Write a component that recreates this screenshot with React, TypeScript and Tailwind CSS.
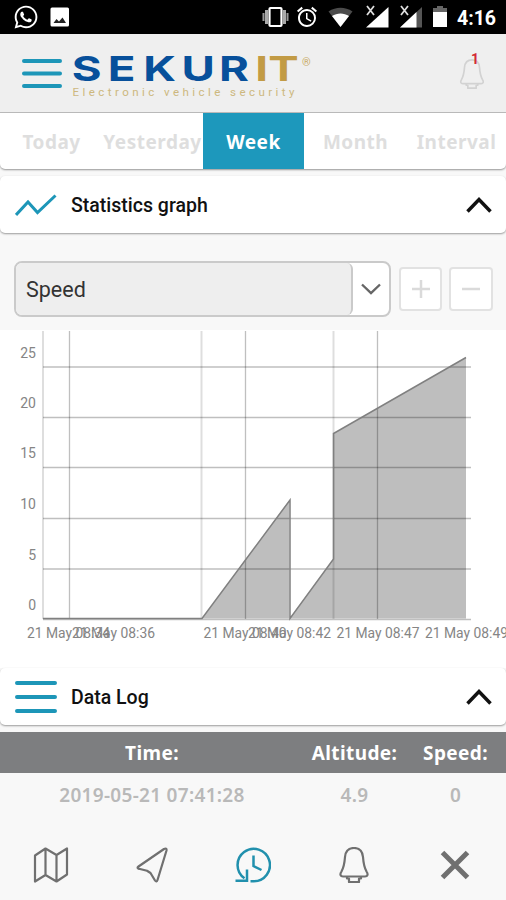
import React, { useState } from "react";
import { FaWhatsapp } from "react-icons/fa";
import { MdAlarm } from "react-icons/md";

const tabs = ["Today", "Yesterday", "Week", "Month", "Interval"];

const yTicks = [
  { label: "25", y: 37 },
  { label: "20", y: 87.5 },
  { label: "15", y: 137.5 },
  { label: "10", y: 188.5 },
  { label: "5", y: 239 },
  { label: "0", y: 289.5 },
];

const xTicks = [
  { label: "21 May 08:34", x: 27 },
  { label: "21 May 08:36", x: 72 },
  { label: "21 May 08:40", x: 203.5 },
  { label: "21 May 08:42", x: 248 },
  { label: "21 May 08:47", x: 336.5 },
  { label: "21 May 08:49", x: 425 },
];

const StatusBar: React.FC = () => (
  <div className="flex h-[34px] shrink-0 items-center bg-black pl-[13px] text-white">
    <FaWhatsapp className="size-[26px]" />
    <svg className="ml-[11px]" width="20" height="20" viewBox="0 0 20 20">
      <rect x="0.5" y="0.5" width="18.5" height="19" rx="1.5" fill="#fff" />
      <path d="M3.500 16l3-4 2.500 2.500 3.500-4 3.500 5.500z" fill="#222" />
    </svg>
    <svg className="ml-[192px]" width="27" height="24" viewBox="0 0 27 24">
      <path d="M1.500 8v8M25.500 8v8" stroke="#999" strokeWidth="2" />
      <path d="M4.500 5v14M22.500 5v14" stroke="#aaa" strokeWidth="3" />
      <rect x="7.500" y="3" width="12" height="18" rx="1" fill="#000" stroke="#fff" strokeWidth="2.200" />
    </svg>
    <MdAlarm className="ml-[6px] size-[24px]" />
    <svg className="ml-[9px]" width="25" height="22" viewBox="0 0 25 22">
      <path d="M0.500 5.500C8 0.500 17 0.500 24.500 5.500L12.500 21z" fill="#4b4b4b" />
      <path d="M4 10C9 6.500 16 6.500 21 10L12.500 21z" fill="#fff" />
    </svg>
    <svg className="ml-[12px]" width="24" height="24" viewBox="0 0 24 24">
      <path d="M23.500 2v20.500H1z" fill="#fff" />
      <path d="M0 0h11v12H0z" fill="#000" />
      <path d="M2 1l7 9M9 1l-7 9" stroke="#ddd" strokeWidth="1.800" />
    </svg>
    <svg className="ml-[10px]" width="24" height="24" viewBox="0 0 24 24">
      <path d="M23 2v20.500H1z" fill="#555" />
      <path d="M17.500 7v15.500H1z" fill="#fff" />
      <path d="M0 0h11v12H0z" fill="#000" />
      <path d="M2 1l7 9M9 1l-7 9" stroke="#ddd" strokeWidth="1.800" />
    </svg>
    <svg className="ml-[10px]" width="14" height="22" viewBox="0 0 14 22">
      <path d="M4 0h6v2h4v5H0V2h4z" fill="#666" />
      <path d="M0 6h14v15H0z" fill="#fff" />
    </svg>
    <span className="ml-[10px] mt-[3px] font-[Roboto] text-[19.5px] leading-none font-bold whitespace-nowrap">
      4:16
    </span>
  </div>
);

const Bell: React.FC<{ className: string; width: number }> = ({ className, width }) => (
  <svg className={className} width="30" height="36" viewBox="0 0 30 36" fill="none" stroke="currentColor" strokeWidth={width} strokeLinejoin="round">
    <path d="M15 1C9.500 1 6.500 4.500 6 10c-.5 7-1 10-3.500 14.500C.5 27.500 1.500 29.500 4 29.500h22c2.500 0 3.500-2 1.500-5C25 20 24.500 17 24 10 23.500 4.500 20.500 1 15 1z" />
    <path d="M8 30v1.500h2v3.500h10v-3.500h2V30" />
  </svg>
);

const Logo: React.FC = () => (
  <svg className="ml-[9px]" width="246" height="52" viewBox="0 0 246 52">
    <g fontFamily="Inter, sans-serif" fontWeight="700" fontSize="34" transform="scale(1.34 1)">
      <text x="0.500 27.500 54 82.500 110.500" y="34.500" fill="#07509b">
        SEKUR
      </text>
      <text x="137.500 147.300" y="34.500" fill="#c29b45">
        IT
      </text>
    </g>
    <text x="231" y="19" fill="#c9ab66" fontFamily="Roboto, sans-serif" fontSize="11">
      ®
    </text>
    <text x="1.500" y="49" fill="#cdb87e" fontFamily="Roboto, sans-serif" fontSize="11.500" textLength="222">
      Electronic vehicle security
    </text>
  </svg>
);

const MenuLines: React.FC<{ width: number; gap: number }> = ({ width, gap }) => (
  <svg width={width} height={gap * 2 + 4} viewBox={`0 0 ${width} ${gap * 2 + 4}`} stroke="#1d96b8" strokeWidth="4" strokeLinecap="round">
    <path d={`M2 2h${width - 4}M2 ${gap + 2}h${width - 4}M2 ${gap * 2 + 2}h${width - 4}`} />
  </svg>
);

interface sectionData {
  title: string;
  icon: React.ReactNode;
}

const Section: React.FC<sectionData> = ({ title, icon }) => (
  <div className="flex h-[57px] shrink-0 items-center rounded-[5px] bg-white pr-[14px] pl-[15px] shadow-[0_1px_2px_rgba(0,0,0,0.38)]">
    <div className="flex w-[56px] items-center">{icon}</div>
    <h2 className="pt-[2px] font-[Roboto] text-[19.5px] font-medium text-[#111]">{title}</h2>
    <svg className="ml-auto" width="26" height="18" viewBox="0 0 26 18" fill="none" stroke="#111" strokeWidth="3.500">
      <path d="M1.500 15.500L13 3.500l11.500 12" />
    </svg>
  </div>
);

const SpeedChart: React.FC = () => (
  <svg className="block shrink-0 bg-white" width="506" height="338" viewBox="0 0 506 338" fontFamily="Roboto, sans-serif">
    <path d="M202 288.500L289.500 170V288.500L333.500 229V103.500L466 27.500V288.500z" fill="#bebebe" />
    <g stroke="#000" strokeOpacity="0.250" strokeWidth="1.300">
      {yTicks.map((tick) => (
        <line key={tick.label} x1="43" x2="471" y1={tick.y} y2={tick.y} />
      ))}
      {[69.5, 245.5, 377.5].map((x) => (
        <line key={x} x1={x} x2={x} y1="1" y2="289" />
      ))}
    </g>
    <path d="M43 1V289M201.500 1V289M333.500 1V289" stroke="#000" strokeOpacity="0.130" strokeWidth="2" />
    <path d="M43 288.500H202L290 170V288.500L333.500 229V103.500L466 27.500" fill="none" stroke="#808080" strokeWidth="1.500" />
    <g fill="#858585" fontSize="14">
      {yTicks.map((tick) => (
        <text key={tick.label} x="36" y={tick.y - 9.5} textAnchor="end">
          {tick.label}
        </text>
      ))}
      {xTicks.map((tick) => (
        <text key={tick.label} x={tick.x} y="308" textLength="83" lengthAdjust="spacingAndGlyphs">
          {tick.label}
        </text>
      ))}
    </g>
  </svg>
);

const BottomNav: React.FC = () => (
  <nav className="grid grow grid-cols-5 items-center justify-items-center pt-[14px] text-[#707070]">
    <svg width="36" height="36" viewBox="0 0 36 36" fill="none" stroke="currentColor" strokeWidth="2.200" strokeLinejoin="round">
      <path d="M2 8.500L12.500 1.500l11 6.500L34 1.500v26L23.500 34.500l-11-6.500L2 34.500zM12.500 1.500V28M23.500 8v26.500" />
    </svg>
    <svg width="32" height="36" viewBox="0 0 32 36" fill="none" stroke="currentColor" strokeWidth="2.200" strokeLinejoin="round">
      <path d="M30.500 3.500c.3-2-.7-2.500-2.500-1.500L2.500 19.500c-1.500 1-1 2 .5 2.300l8 2 3.500 2.200 4.500 7.500c1 1.500 2 1.300 2.500-.5z" />
    </svg>
    <svg width="36" height="36" viewBox="0 0 36 36" fill="none" stroke="#2190ad" strokeWidth="2.500">
      <path d="M9.500 31.300A16.200 16.200 0 1 1 18.500 34.200H15.500" />
      <path d="M0.500 33.700h11.500V22.500M18.500 8.500V19l8 4" />
    </svg>
    <Bell className="" width={2.2} />
    <svg width="30" height="30" viewBox="0 0 30 30" fill="none" stroke="currentColor" strokeWidth="5">
      <path d="M2.500 2.500l25 25M27.500 2.500l-25 25" />
    </svg>
  </nav>
);

const App: React.FC = () => {
  const [active, setActive] = useState("Week");

  return (
    <div className="flex h-[900px] w-[506px] flex-col overflow-hidden bg-[#f8f8f8]">
      <StatusBar />
      <header className="flex h-[79px] shrink-0 items-start border-b border-[#bdbdbd] bg-[#efefef] pl-[22px]">
        <div className="mt-[25px]">
          <MenuLines width={40} gap={12.5} />
        </div>
        <div className="mt-[13px]">
          <Logo />
        </div>
        <div className="relative mt-[25px] ml-auto mr-[21px]">
          <Bell className="h-[30px] w-[26px] text-[#d2d2d2]" width={2} />
          <span className="absolute -top-[7px] left-[12px] font-[Roboto] text-[14px] leading-[15px] font-bold text-[#d32a36]">
            1
          </span>
        </div>
      </header>

      <div className="grid h-[56px] shrink-0 grid-cols-[203px_101px_202px] overflow-hidden rounded-b-[5px] bg-white font-['Noto_Sans'] text-[19px] font-bold tracking-[0.5px] shadow-[0_1px_2px_rgba(0,0,0,0.4)]">
        {[tabs.slice(0, 2), tabs.slice(2, 3), tabs.slice(3)].map((group) => (
          <div key={group[0]} className="flex">
            {group.map((tab) => (
              <button
                key={tab}
                onClick={() => setActive(tab)}
                className={
                  tab === active
                    ? "flex w-[101px] shrink-0 items-center justify-center bg-[#1d98bc] pt-[2px] text-white"
                    : "flex w-[101px] shrink-0 items-center justify-center pt-[2px] pl-[2px] text-[#dedede]"
                }
              >
                {tab}
              </button>
            ))}
          </div>
        ))}
      </div>

      <div className="mt-[7px] flex flex-col">
        <Section
          title="Statistics graph"
          icon={
            <svg width="42" height="24" viewBox="0 0 42 24" fill="none" stroke="#1d96b8" strokeWidth="3">
              <path d="M1 22L13 9l9.500 10.500L40.500 2.500" />
            </svg>
          }
        />
      </div>

      <div className="flex h-[97px] shrink-0 items-center pt-[14px] pl-[14px]">
        <div className="flex h-[56px] w-[377px] overflow-hidden rounded-[8px] border-2 border-[#cacaca] bg-white">
          <div className="flex w-[337px] items-center rounded-r-[6px] border-r-2 border-[#cacaca] bg-[#eee] pt-[3px] pl-[10px] font-[Roboto] text-[21.5px] text-[#333]">
            Speed
          </div>
          <div className="flex grow items-center justify-center">
            <svg width="20" height="12" viewBox="0 0 20 12" fill="none" stroke="#666" strokeWidth="2.400">
              <path d="M1 1.500l9 8.500 9-8.500" />
            </svg>
          </div>
        </div>
        <button className="ml-[8px] flex h-[44px] w-[43px] items-center justify-center rounded-[4px] border-2 border-[#e2e2e2] bg-white">
          <svg width="18" height="18" viewBox="0 0 18 18" stroke="#dadada" strokeWidth="2.500">
            <path d="M0 9h18M9 0v18" />
          </svg>
        </button>
        <button className="ml-[7px] flex h-[44px] w-[44px] items-center justify-center rounded-[4px] border-2 border-[#e2e2e2] bg-white">
          <svg width="18" height="18" viewBox="0 0 18 18" stroke="#dadada" strokeWidth="2.500">
            <path d="M0 9h18" />
          </svg>
        </button>
      </div>

      <SpeedChart />
      <Section title="Data Log" icon={<MenuLines width={42} gap={14} />} />

      <div className="mt-[7px] grid h-[41px] shrink-0 grid-cols-[304px_101px_101px] items-center bg-[#7d7e80] pt-[2px] text-center font-['Noto_Sans'] text-[19px] font-bold tracking-[0.4px] text-white">
        <span>Time:</span>
        <span>Altitude:</span>
        <span>Speed:</span>
      </div>
      <div className="grid h-[43px] shrink-0 grid-cols-[304px_101px_101px] items-center pt-[2px] text-center font-['Noto_Sans'] text-[19px] font-semibold tracking-[0.3px] text-[#b9b9b9]">
        <span>2019-05-21 07:41:28</span>
        <span>4.9</span>
        <span>0</span>
      </div>
      <BottomNav />
    </div>
  );
};

export default App;
